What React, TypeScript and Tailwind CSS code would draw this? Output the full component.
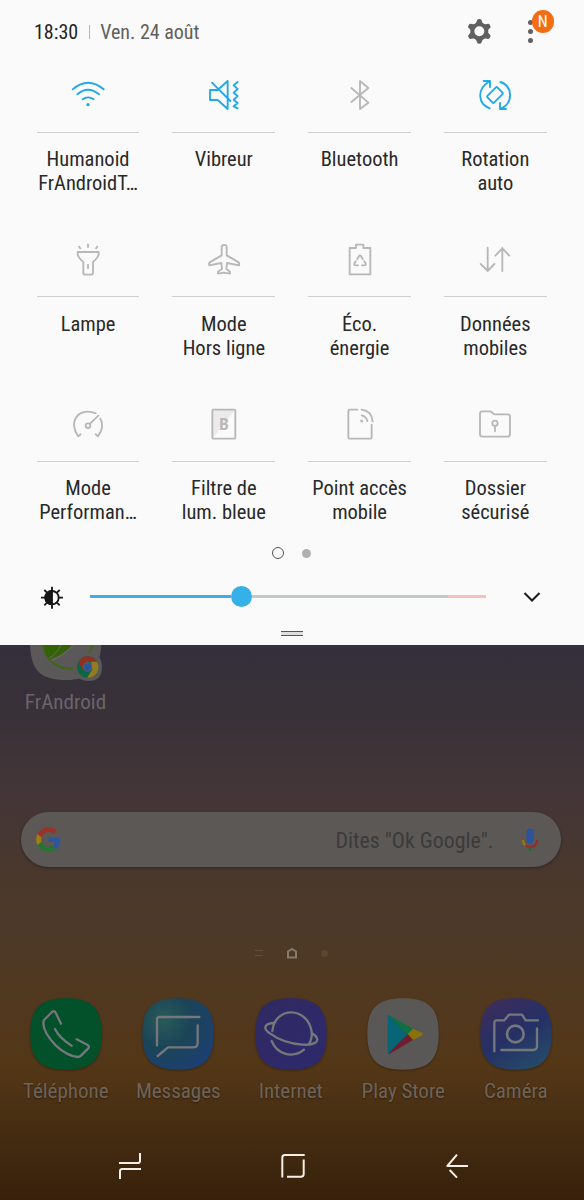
import type { ReactNode } from 'react';

type Tile = { label: string[]; box: string; active?: boolean; icon: ReactNode };

const tiles: Tile[] = [
  {
    label: ['Humanoid', 'FrAndroidT…'],
    box: '204 225 120 120',
    active: true,
    icon: (
      <>
        <path d="M218 268Q264 228 311 268M232 283Q264 256 297 283M248 298Q264 286 281 298" />
        <circle cx="264" cy="314" r="5" fill="currentColor" stroke="none" />
      </>
    ),
  },
  {
    label: ['Vibreur'],
    box: '612 225 120 120',
    active: true,
    icon: (
      <path d="M683 243V327L653 300H630V270H653L683 243M636 248L691 303M713 246L701 256L713 267L701 278L713 288L701 299L713 309L701 319L713 325" />
    ),
  },
  {
    label: ['Bluetooth'],
    box: '143 225 120 120',
    icon: <path d="M177 264L228 308L203 327V243L228 264L177 306" />,
  },
  {
    label: ['Rotation', 'auto'],
    box: '550 225 120 120',
    active: true,
    icon: (
      <>
        <path d="M594 325C558 312 556 267 590 246M626 246C664 258 664 308 630 325M576 243H595V261M643 327H625V309" />
        <rect x="589" y="271" width="42" height="28" rx="3" transform="rotate(-45 610 285)" />
      </>
    ),
  },
  {
    label: ['Lampe'],
    box: '204 57 120 120',
    icon: (
      <>
        <path d="M233 96H296V103Q294 113 279 126V158Q279 164 272 164H257Q250 164 250 158V126Q235 113 233 103Z" />
        <path d="M264 71V83M236 78L242 87M293 78L287 87M264 132V146" strokeLinecap="butt" />
      </>
    ),
  },
  {
    label: ['Mode', 'Hors ligne'],
    box: '612 57 120 120',
    icon: (
      <path d="M665 82C665 72 680 72 680 82V106L716 127Q719 131 717 136L681 129L679 147L690 155V161L672 158L654 161V155L666 147L664 129L628 136Q626 131 629 127L665 106Z" />
    ),
  },
  {
    label: ['Éco.', 'énergie'],
    box: '143 57 120 120',
    icon: (
      <>
        <path d="M172 84H191V74H213V84H234V163H172Z" />
        <path d="M195 117L200 108Q203 105 206 108L211 117M190 124L186 131Q185 136 190 136H197M216 124L220 131Q221 136 216 136H209" />
      </>
    ),
  },
  {
    label: ['Données', 'mobiles'],
    box: '550 57 120 120',
    icon: <path d="M588 83V153M567 132L588 153L608 132M632 153V84M611 107L632 85L653 107" />,
  },
  {
    label: ['Mode', 'Performan…'],
    box: '204 41 120 120',
    icon: (
      <>
        <path d="M242 132L235 138C204 98 232 48 287 69M287 132L294 138Q315 108 301 85M271 99L295 76" />
        <circle cx="264" cy="106" r="7" />
      </>
    ),
  },
  {
    label: ['Filtre de', 'lum. bleue'],
    box: '612 41 120 120',
    icon: (
      <>
        <path d="M637 57H707L637 145Z" fill="#ebebeb" stroke="none" />
        <rect x="637" y="58" width="69" height="87" rx="3" />
        <text
          x="672"
          y="120"
          textAnchor="middle"
          fontSize="51"
          fontWeight="700"
          fill="currentColor"
          stroke="none"
          className="[font-stretch:100%]"
        >
          B
        </text>
      </>
    ),
  },
  {
    label: ['Point accès', 'mobile'],
    box: '143 41 120 120',
    icon: (
      <>
        <path d="M195 58H172Q168 58 168 62V141Q168 145 172 145H234Q238 145 238 141V103M208 58Q238 62 241 93M208 75Q222 78 225 92" />
        <circle cx="208" cy="92" r="4.5" fill="currentColor" stroke="none" />
      </>
    ),
  },
  {
    label: ['Dossier', 'sécurisé'],
    box: '550 41 120 120',
    icon: (
      <>
        <path d="M572 63H596L608 72H648Q655 72 655 79V132Q655 139 648 139H572Q565 139 565 132V70Q565 63 572 63Z" />
        <circle cx="610" cy="99" r="8" />
        <path d="M610 107V123" />
      </>
    ),
  },
];

const SQUIRCLE = 'M108 1C185 1 215 31 215 108S185 215 108 215 1 185 1 108 31 1 108 1Z';

type DockApp = { name: string; fill: string; icon: ReactNode };

const dock: DockApp[] = [
  {
    name: 'Téléphone',
    fill: '#03512b',
    icon: (
      <path d="M93 77L77 44Q73 36 66 42L42 66Q32 94 77 142Q110 173 143 177Q149 177 153 173L174 152Q180 146 173 141L140 124M75 93Q88 120 125 143" />
    ),
  },
  {
    name: 'Messages',
    fill: 'url(#messages)',
    icon: <path d="M45 142V64Q45 57 52 57H172M167 82V134Q167 148 153 148H78L47 174" />,
  },
  {
    name: 'Internet',
    fill: 'url(#internet)',
    icon: (
      <path d="M52 99C60 23 158 25 170 101Q172 122 162 138M56 75C24 77 25 94 46 107Q85 136 142 140C188 143 200 123 171 106M50 129C66 170 114 182 147 155" />
    ),
  },
  {
    name: 'Play Store',
    fill: '#5a5856',
    icon: (
      <g stroke="none">
        <path d="M62 54Q62 49 67 52L122 108L66 166Q62 167 62 162Z" fill="#086575" />
        <path d="M65 51L138 92L122 108Z" fill="#0b733b" />
        <path d="M138 92L166 105Q169 108 166 112L138 126L122 108Z" fill="#8b700e" />
        <path d="M122 108L138 126L68 167L63 167Z" fill="#711d30" />
      </g>
    ),
  },
  {
    name: 'Caméra',
    fill: 'url(#camera)',
    icon: (
      <>
        <path d="M43 160V74Q43 67 50 67H73L87 50H126L137 67H174M171 91V145Q171 156 160 156H64" />
        <circle cx="106" cy="108" r="25" strokeWidth="8" />
      </>
    ),
  },
];

function QuickTile({ tile }: { tile: Tile }) {
  return (
    <div className="flex h-[164.33px] flex-col items-center">
      <svg
        viewBox={tile.box}
        className={tile.active ? 'size-10 shrink-0 text-[#1eaae8]' : 'size-10 shrink-0 text-[#b8b8b8]'}
        fill="none"
        stroke="currentColor"
        strokeWidth="5.6"
        strokeLinecap="round"
        strokeLinejoin="round"
      >
        {tile.icon}
      </svg>
      <div className="mt-[17px] h-px w-full shrink-0 bg-[#cfcfcf]" />
      <div className="mt-[14.4px] flex flex-col items-center whitespace-nowrap text-[20.5px] leading-6 text-[#292929]">
        {tile.label.map((line) => (
          <span key={line}>{line}</span>
        ))}
      </div>
    </div>
  );
}

function Header() {
  return (
    <header className="flex h-[75px] items-start pl-[34px] pr-[30px] text-[20px] leading-6">
      <span className="mt-5 text-[#242424]">18:30</span>
      <span className="ml-[11px] mt-[25px] h-[14px] w-px bg-[#b5b5b5]" />
      <span className="ml-[10px] mt-5 text-[#606060]">Ven. 24 août</span>
      <svg viewBox="523 54 80 80" className="ml-auto mt-[18px] h-[26.67px] w-[26.67px]" fill="#606060">
        <circle cx="563" cy="94" r="21" fill="none" stroke="#606060" strokeWidth="12" />
        {[0, 60, 120, 180, 240, 300].map((angle) => (
          <path key={angle} d="M552 72L557 59Q558 57 563 57T569 59L574 72Z" transform={`rotate(${angle} 563 94)`} />
        ))}
      </svg>
      <div className="relative ml-[30px] mt-[18px] flex h-[28px] w-[31px] flex-col gap-[4px] pl-[5px] pt-[2px]">
        <i className="size-[5px] rounded-full bg-[#606060]" />
        <i className="size-[5px] rounded-full bg-[#606060]" />
        <i className="size-[5px] rounded-full bg-[#606060]" />
        <span className="absolute -top-2 left-[8.5px] flex size-[22.5px] items-center justify-center rounded-full bg-[#f26d13] pt-[2px] text-[16px] leading-none text-white [font-stretch:90%]">
          N
        </span>
      </div>
    </header>
  );
}

function Brightness() {
  return (
    <div className="flex h-[22px] items-center pl-10">
      <svg viewBox="120 149 72 72" className="mt-px size-6" fill="#161616" stroke="#161616" strokeWidth="5.5">
        <circle cx="156" cy="187" r="20" fill="none" />
        <path d="M156 167A20 20 0 0 0 156 207Z" />
        <path d="M156 154V166M156 208V220M123 187H135M177 187H189M133 164L141 172M171 202L179 210M133 210L141 202M171 172L179 164" />
      </svg>
      <div className="ml-[26px] flex w-[396px] items-center">
        <div className="h-[3px] w-[141px] bg-[#43ade0]" />
        <div className="size-[21px] rounded-full bg-[#35b0e8]" />
        <div className="h-[3px] w-[196px] bg-[#c3c8cb]" />
        <div className="h-[3px] w-[38px] bg-[#f6c0bd]" />
      </div>
      <svg viewBox="0 0 18 12" className="ml-[37px] mt-[2px] h-3 w-[18px]" fill="none" stroke="#1c1c1c" strokeWidth="2">
        <path d="M1.5 2L9 9.5L16.5 2" />
      </svg>
    </div>
  );
}

function Panel() {
  return (
    <section className="h-[645px] shrink-0 bg-[#fafafa]">
      <Header />
      <div className="grid h-[471px] grid-cols-4 gap-x-[33px] pl-[36.7px] pr-[37.3px]">
        {tiles.map((tile) => (
          <QuickTile key={tile.label.join(' ')} tile={tile} />
        ))}
      </div>
      <div className="flex h-[14px] items-center justify-center gap-[18px] pr-[2px]">
        <i className="size-[12px] rounded-full border-[1.5px] border-[#555]" />
        <i className="size-[9px] rounded-full bg-[#b0b0b0]" />
      </div>
      <div className="mt-[25px]">
        <Brightness />
      </div>
      <div className="mx-auto mt-[24px] h-[5px] w-[22px] border-y border-[#555] bg-[#dedede]" />
    </section>
  );
}

function Shortcut() {
  return (
    <div className="flex w-[131px] flex-col items-center">
      <svg viewBox="90 330 219 111" className="ml-[2px] h-[37px] w-[73px]">
        <path d="M90 316C90 403 116 435 199 435C270 435 304 403 304 316Z" fill="#5a5859" />
        <path d="M128 330C140 379 170 402 219 401M276 330Q274 344 268 353" fill="none" stroke="#416610" strokeWidth="6" />
        <path d="M132 330H216Q190 361 147 373Q134 355 132 330Z" fill="#346208" />
        <path d="M183 330Q170 357 146 370M220 330Q190 363 154 377" fill="none" stroke="#657057" strokeWidth="3" />
        <path d="M222 391Q221 354 262 354Q306 354 306 396T266 438Q222 438 222 391Z" fill="#5a5859" />
        <circle cx="263" cy="396" r="32" fill="#0d6541" />
        <path d="M235 380A32 32 0 0 1 291 380H263L249 404Z" fill="#8f3127" />
        <path d="M291 380A32 32 0 0 1 261 428L277 404L273 380Z" fill="#947a22" />
        <circle cx="263" cy="396" r="14" fill="#606365" />
        <circle cx="263" cy="396" r="11" fill="#28569b" />
      </svg>
      <span className="mt-2 whitespace-nowrap text-[21.1px] leading-6 text-[#696569]">FrAndroid</span>
    </div>
  );
}

function SearchBar() {
  return (
    <div className="ml-[20.5px] mt-[98px] flex h-[55px] w-[540.5px] shrink-0 items-center rounded-full bg-[#5b5855] pl-[14px] pr-[22.5px] shadow-[0_1px_3px_rgba(0,0,0,0.35)]">
      <svg viewBox="0 0 24 24" className="h-[27px] w-[27px]" preserveAspectRatio="none">
        <path fill="#2c57a0" d="M22.56 12.25c0-.78-.07-1.53-.2-2.25H12v4.26h5.92c-.26 1.37-1.04 2.53-2.21 3.31v2.77h3.57c2.08-1.92 3.28-4.74 3.28-8.09z" />
        <path fill="#277433" d="M12 23c2.97 0 5.46-.98 7.28-2.66l-3.57-2.77c-.98.66-2.23 1.06-3.71 1.06-2.86 0-5.29-1.93-6.16-4.53H2.18v2.84C3.99 20.53 7.7 23 12 23z" />
        <path fill="#a37b13" d="M5.84 14.09c-.22-.66-.35-1.36-.35-2.09s.13-1.43.35-2.09V7.07H2.18C1.43 8.55 1 10.22 1 12s.43 3.45 1.18 4.93l3.66-2.84z" />
        <path fill="#9c3127" d="M12 5.38c1.62 0 3.06.56 4.21 1.64l3.15-3.15C17.45 2.09 14.97 1 12 1 7.7 1 3.99 3.47 2.18 7.07l3.66 2.84c.87-2.6 3.3-4.53 6.16-4.53z" />
      </svg>
      <span className="ml-auto mt-[2px] whitespace-nowrap text-[21.9px] leading-6 text-[#3c3b3a]">Dites "Ok Google".</span>
      <svg viewBox="0 0 18 24" className="ml-[27px] h-6 w-[18px]" fill="none" strokeWidth="2.2">
        <rect x="5.5" y="0.5" width="7" height="15" rx="3.5" fill="#2b529a" />
        <path d="M2 12Q2 15.5 4.5 17.3" stroke="#9c7615" />
        <path d="M16 12C16 20 7 20 4.5 17.3" stroke="#8f3028" />
        <path d="M9 19V23" stroke="#28672f" />
      </svg>
    </div>
  );
}

function PageMarks() {
  return (
    <div className="mt-[80px] flex h-3 shrink-0 items-center justify-center gap-[23px] pr-px">
      <i className="h-[6px] w-[8px] border-y border-[#65513a]" />
      <svg viewBox="0 0 12 12" className="size-3" fill="none" stroke="#85796b" strokeWidth="2">
        <path d="M2 10.5V4.5L6 2L10 4.5V10.5Z" />
      </svg>
      <i className="size-[7px] rounded-full bg-[#5a452f]" />
    </div>
  );
}

function Dock() {
  return (
    <div className="ml-[9.5px] mt-[38.5px] grid w-[562.5px] shrink-0 grid-cols-5">
      {dock.map((app) => (
        <div key={app.name} className="flex flex-col items-center">
          <svg
            viewBox="0 0 216 216"
            className="size-[72px] drop-shadow-[0_1px_1px_rgba(0,0,0,0.3)]"
            fill="none"
            stroke="#74777b"
            strokeWidth="7"
            strokeLinecap="round"
            strokeLinejoin="round"
          >
            <path d={SQUIRCLE} fill={app.fill} stroke="none" />
            {app.icon}
          </svg>
          <span className="mt-[9px] whitespace-nowrap text-[21px] leading-6 text-[#706358] [text-shadow:0_1px_2px_rgba(0,0,0,0.4)]">
            {app.name}
          </span>
        </div>
      ))}
    </div>
  );
}

function NavBar() {
  return (
    <nav className="mt-[47.5px] flex h-8 shrink-0 items-center pl-[116px]">
      <svg viewBox="348 510 84 96" className="h-8 w-7" fill="none" stroke="#f7eee6" strokeWidth="6">
        <path d="M357 549H413Q420 549 420 542V519M360 597V574Q360 567 367 567H423" />
      </svg>
      <svg viewBox="0 0 28 32" className="ml-[135px] h-8 w-7" fill="none" stroke="#f7eee6" strokeWidth="2">
        <path d="M3.3 27.5V7.5Q3.3 5 5.8 5H25.7M24.7 9.5V24Q24.7 26.7 22 26.7H8" />
      </svg>
      <svg viewBox="453 510 84 96" className="ml-[136px] h-8 w-7" fill="none" stroke="#f7eee6" strokeWidth="6">
        <path d="M528 558H466L495 524M473 570L495 593" strokeLinejoin="round" />
      </svg>
    </nav>
  );
}

function Gradients() {
  return (
    <svg className="absolute size-0">
      <defs>
        <radialGradient id="messages" cx="0.3" cy="0.3" r="0.85">
          <stop offset="0" stopColor="#285b59" />
          <stop offset="0.45" stopColor="#1c4457" />
          <stop offset="1" stopColor="#1c3f75" />
        </radialGradient>
        <linearGradient id="internet" x1="0" y1="0" x2="1" y2="1">
          <stop offset="0" stopColor="#302a62" />
          <stop offset="1" stopColor="#2e296c" />
        </linearGradient>
        <linearGradient id="camera" x1="0.2" y1="0" x2="0.8" y2="1">
          <stop offset="0" stopColor="#3c2d5d" />
          <stop offset="0.5" stopColor="#253065" />
          <stop offset="1" stopColor="#264c69" />
        </linearGradient>
      </defs>
    </svg>
  );
}

export default function App() {
  return (
    <main className="relative flex h-[1200px] w-[584px] flex-col overflow-hidden bg-[linear-gradient(180deg,#332f3b_0px,#332f3b_645px,#3b3238_730px,#443637_800px,#4a382d_875px,#4d3924_955px,#51381f_1000px,#533717_1065px,#4a3013_1110px,#3f280f_1160px,#38200b_1200px)] font-['Roboto_Condensed',Roboto,sans-serif] [font-stretch:75%]">
      <Gradients />
      <Panel />
      <Shortcut />
      <SearchBar />
      <PageMarks />
      <Dock />
      <NavBar />
    </main>
  );
}
